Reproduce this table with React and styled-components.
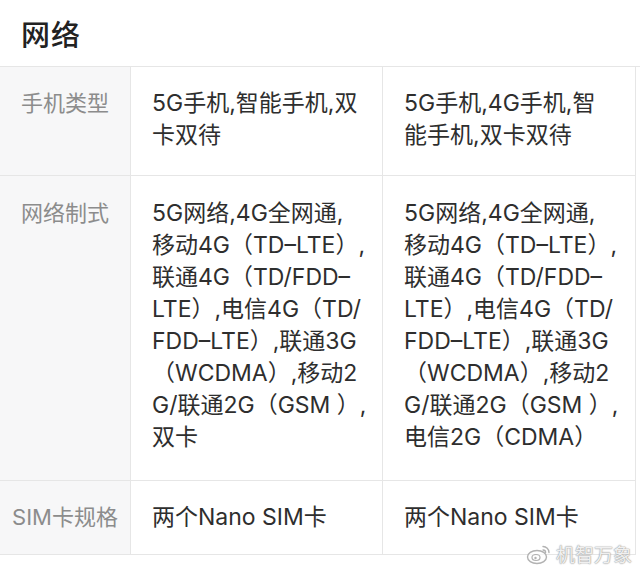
import React from "react";
import styled, { createGlobalStyle } from "styled-components";

const GlobalStyle = createGlobalStyle`
  html, body {
    margin: 0;
    padding: 0;
    background: #fff;
  }
  body {
    font-family: "Inter", "Noto Sans CJK SC", sans-serif;
    color: #333;
  }
`;

const Page = styled.div`
  position: relative;
  width: 640px;
  height: 567px;
  overflow: hidden;
  background: #fff;
`;

const Title = styled.h1`
  margin: 0;
  height: 66px;
  padding-left: 21px;
  display: flex;
  align-items: center;
  font-size: 29px;
  font-weight: 500;
  color: #222;
  letter-spacing: 1px;
`;

const Table = styled.div`
  display: grid;
  grid-template-columns: 131px 252px 253px;
  border-top: 1px solid #e6e6e6;
`;

const Cell = styled.div`
  border-right: 1px solid #e6e6e6;
  border-bottom: 1px solid #e6e6e6;
  padding: ${(p) => p.$top} 0 ${(p) => p.$bottom} 21px;
  font-size: 23px;
  line-height: 32px;
  color: #2e2e2e;
`;

const Label = styled(Cell)`
  background: #f7f7f8;
  padding-left: 0;
  text-align: center;
  color: #8c8c8c;
  font-size: 22px;
`;

const Line = styled.span`
  display: block;
  white-space: nowrap;
`;

const Watermark = styled.div`
  position: absolute;
  right: 8px;
  bottom: 0px;
  display: flex;
  align-items: center;
  gap: 4px;
  font-size: 19px;
  color: rgba(255, 255, 255, 0.85);
  text-shadow: 0 0 1px #999, 0 0 1px #999, 0 0 2px #bbb;
  opacity: 0.9;
`;

const rows = [
  {
    label: "手机类型",
    a: ["5G手机,智能手机,双", "卡双待"],
    b: ["5G手机,4G手机,智", "能手机,双卡双待"],
    top: "20px",
    bottom: "24px",
  },
  {
    label: "网络制式",
    a: [
      "5G网络,4G全网通,",
      "移动4G（TD–LTE）,",
      "联通4G（TD/FDD–",
      "LTE）,电信4G（TD/",
      "FDD–LTE）,联通3G",
      "（WCDMA）,移动2",
      "G/联通2G（GSM ）,",
      "双卡",
    ],
    b: [
      "5G网络,4G全网通,",
      "移动4G（TD–LTE）,",
      "联通4G（TD/FDD–",
      "LTE）,电信4G（TD/",
      "FDD–LTE）,联通3G",
      "（WCDMA）,移动2",
      "G/联通2G（GSM ）,",
      "电信2G（CDMA）",
    ],
    top: "21px",
    bottom: "27px",
  },
  {
    label: "SIM卡规格",
    a: ["两个Nano SIM卡"],
    b: ["两个Nano SIM卡"],
    top: "20px",
    bottom: "21px",
  },
];

const WeiboLogo = () => (
  <svg width="26" height="22" viewBox="0 0 26 22" fill="none">
    <ellipse cx="11" cy="14" rx="9.5" ry="6.5" stroke="#aaa" strokeWidth="1.4" fill="rgba(255,255,255,0.7)" />
    <ellipse cx="10" cy="14.5" rx="4" ry="3" stroke="#aaa" strokeWidth="1.2" />
    <circle cx="9.5" cy="15" r="1.2" fill="#aaa" />
    <path d="M17 3.5a6 6 0 0 1 6 6" stroke="#aaa" strokeWidth="1.4" strokeLinecap="round" />
    <path d="M17 7a2.6 2.6 0 0 1 2.6 2.6" stroke="#aaa" strokeWidth="1.3" strokeLinecap="round" />
  </svg>
);

export default function App() {
  return (
    <Page>
      <GlobalStyle />
      <Title>网络</Title>
      <Table>
        {rows.map((row) => (
          <React.Fragment key={row.label}>
            <Label $top={row.top} $bottom={row.bottom}>
              {row.label}
            </Label>
            <Cell $top={row.top} $bottom={row.bottom}>
              {row.a.map((l, i) => (
                <Line key={i}>{l}</Line>
              ))}
            </Cell>
            <Cell $top={row.top} $bottom={row.bottom}>
              {row.b.map((l, i) => (
                <Line key={i}>{l}</Line>
              ))}
            </Cell>
          </React.Fragment>
        ))}
      </Table>
      <Watermark>
        <WeiboLogo />
        机智万象
      </Watermark>
    </Page>
  );
}
